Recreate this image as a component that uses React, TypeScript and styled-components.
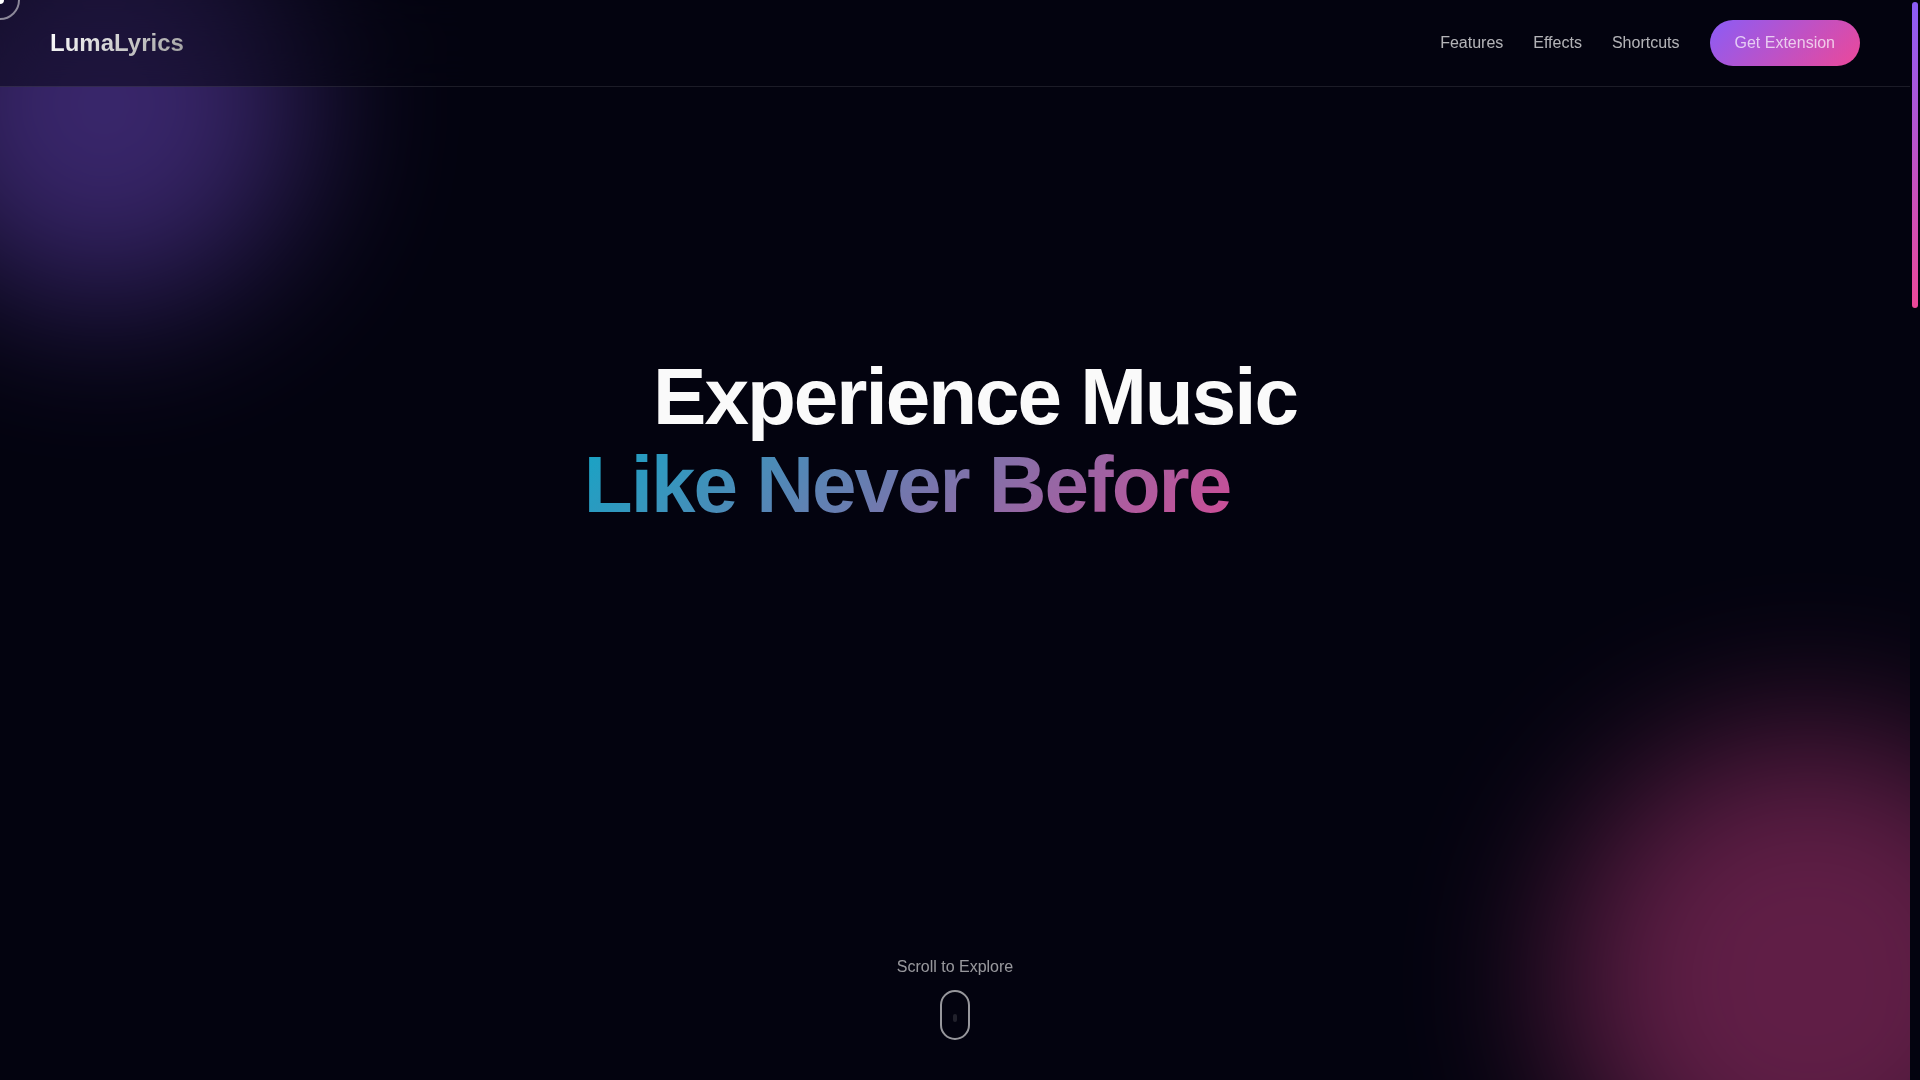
import React from "react";
import styled, { createGlobalStyle } from "styled-components";

const color = {
  background: "#03030f",
  violet: "#8b5cf6",
  pink: "#ec4899",
  cyan: "#06b6d4",
  text: "#fafafa",
};

const GlobalStyle = createGlobalStyle`
  * {
    box-sizing: border-box;
    margin: 0;
    padding: 0;
  }
  body {
    background: ${color.background};
    color: ${color.text};
    font-family: "Liberation Sans", Arial, sans-serif;
    font-size: 16px;
    line-height: 26px;
    overflow: hidden;
  }
`;

const Shell = styled.div`
  display: grid;
  grid-template-columns: 1fr 10px;
  height: 100vh;
`;

const Page = styled.div`
  position: relative;
  display: flex;
  flex-direction: column;
  min-width: 0;
  overflow: hidden;
`;

const Orb = styled.div<{ $size: number; $color: string; $corner: "start" | "end" }>`
  position: absolute;
  width: ${(p) => p.$size}px;
  height: ${(p) => p.$size}px;
  ${(p) =>
    p.$corner === "start"
      ? "top: -96px; left: -96px;"
      : "right: -150px; bottom: -150px;"}
  border-radius: 50%;
  background: ${(p) => p.$color};
  filter: blur(80px);
  opacity: 0.4;
`;

const Header = styled.header`
  position: relative;
  display: flex;
  align-items: center;
  justify-content: space-between;
  padding: 20px 50px;
  background: rgba(3, 3, 15, 0.5);
  border-bottom: 1px solid rgba(255, 255, 255, 0.1);
  backdrop-filter: blur(20px);
`;

const Logo = styled.a`
  font-size: 24px;
  font-weight: 700;
  text-decoration: none;
  color: transparent;
  background: linear-gradient(135deg, #fff, #a0a0a0);
  background-clip: text;
  -webkit-background-clip: text;
`;

const Nav = styled.nav`
  display: flex;
  align-items: center;
  gap: 30px;
`;

const NavLink = styled.a`
  color: rgba(255, 255, 255, 0.7);
  text-decoration: none;
`;

const NavButton = styled.button`
  padding: 10px 25px;
  border: 0;
  border-radius: 30px;
  background: linear-gradient(135deg, ${color.violet}, ${color.pink});
  color: rgba(255, 255, 255, 0.7);
  font: inherit;
`;

const Hero = styled.main`
  position: relative;
  flex: 1;
  display: flex;
  flex-direction: column;
  align-items: center;
  justify-content: space-between;
  padding: 266px 50px 40px;
`;

const Title = styled.h1`
  display: flex;
  flex-direction: column;
  align-items: center;
  font-size: 80px;
  font-weight: 700;
  line-height: 88px;
  letter-spacing: -2px;
  white-space: nowrap;
`;

const LeadLine = styled.span`
  margin-left: 40px;
`;

const GradientLine = styled.span`
  padding: 0 68px;
  margin-right: 96px;
  color: transparent;
  background: linear-gradient(135deg, ${color.cyan}, ${color.pink});
  background-clip: text;
  -webkit-background-clip: text;
  opacity: 0.95;
`;

const ScrollHint = styled.div`
  display: flex;
  flex-direction: column;
  align-items: center;
  gap: 10px;
  opacity: 0.6;
`;

const Mouse = styled.div`
  display: flex;
  align-items: center;
  justify-content: center;
  width: 30px;
  height: 50px;
  padding-top: 6px;
  border: 2px solid ${color.text};
  border-radius: 15px;
`;

const Wheel = styled.div`
  width: 4px;
  height: 8px;
  border-radius: 2px;
  background: rgba(255, 255, 255, 0.2);
`;

const CursorRing = styled.div`
  position: fixed;
  top: -20px;
  left: -20px;
  width: 40px;
  height: 40px;
  border: 2px solid rgba(255, 255, 255, 0.5);
  border-radius: 50%;
  pointer-events: none;
`;

const CursorDot = styled.div`
  position: fixed;
  top: -4px;
  left: -4px;
  width: 8px;
  height: 8px;
  border-radius: 50%;
  background: #fff;
  pointer-events: none;
`;

const ScrollRail = styled.div`
  padding: 2px;
  background: ${color.background};
`;

const ScrollThumb = styled.div`
  height: 306px;
  border-radius: 3px;
  background: linear-gradient(${color.violet}, ${color.pink});
`;

const links = [
  { label: "Features", href: "#features" },
  { label: "Effects", href: "#effects" },
  { label: "Shortcuts", href: "#shortcuts" },
];

export default function App() {
  return (
    <>
      <GlobalStyle />
      <Shell>
        <Page>
          <Orb $size={400} $color={color.violet} $corner="start" />
          <Orb $size={500} $color={color.pink} $corner="end" />
          <Header>
            <Logo href="#top">LumaLyrics</Logo>
            <Nav>
              {links.map((link) => (
                <NavLink key={link.href} href={link.href}>
                  {link.label}
                </NavLink>
              ))}
              <NavButton type="button">Get Extension</NavButton>
            </Nav>
          </Header>
          <Hero>
            <Title>
              <LeadLine>Experience Music</LeadLine>
              <GradientLine>Like Never Before</GradientLine>
            </Title>
            <ScrollHint>
              <span>Scroll to Explore</span>
              <Mouse>
                <Wheel />
              </Mouse>
            </ScrollHint>
          </Hero>
        </Page>
        <ScrollRail>
          <ScrollThumb />
        </ScrollRail>
      </Shell>
      <CursorRing />
      <CursorDot />
    </>
  );
}
